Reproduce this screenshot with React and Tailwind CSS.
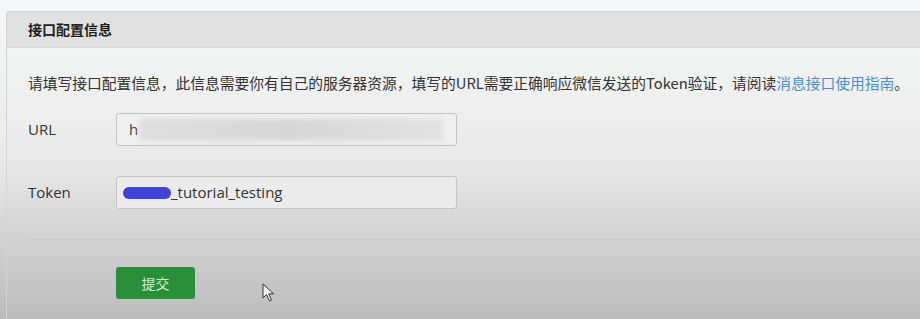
export default function App() {
  return (
    <div
      className="relative w-[920px] h-[319px] overflow-hidden bg-gradient-to-b from-[#f7f8f9] via-[#e9e9e9] to-[#bcbcbc] pt-[11px] pl-[6px]"
      style={{ fontFamily: '"Noto Sans CJK SC", "Noto Sans", sans-serif' }}
    >
      <div className="h-full border-l border-t border-[#d4d4d4] rounded-tl-[3px]">
        {/* header */}
        <div className="h-[36px] flex items-center px-[21px] bg-[#e1e1e1] border-b border-[#d9d9d9]">
          <span className="text-[14px] font-bold text-[#222]">接口配置信息</span>
        </div>

        <div className="pl-[21px]">
          <p className="mt-[25px] leading-[20px] text-[14.75px] text-[#333] whitespace-nowrap">
            请填写接口配置信息，此信息需要你有自己的服务器资源，填写的URL需要正确响应微信发送的Token验证，请阅读
            <span className="text-[#4a8fd8]">消息接口使用指南</span>。
          </p>

          {/* URL */}
          <div className="mt-[20px] flex items-center">
            <label className="w-[88px] text-[15px] text-[#333]" style={{ fontFamily: '"Open Sans", sans-serif' }}>URL</label>
            <div className="w-[341px] h-[33px] flex items-center px-[12px] border border-[#c4c4c4] rounded-[3px] bg-[#efefef] overflow-hidden">
              <span className="text-[15px] text-[#444]" style={{ fontFamily: '"Open Sans", sans-serif' }}>h</span>
              <div className="flex-1 h-[22px] ml-[2px] rounded-[2px] bg-gradient-to-r from-[#dedede] via-[#d7d7d7] to-[#e2e2e2] blur-[2px]"></div>
            </div>
          </div>

          {/* Token */}
          <div className="mt-[30px] flex items-center">
            <label className="w-[88px] text-[15px] text-[#333]" style={{ fontFamily: '"Open Sans", sans-serif' }}>Token</label>
            <div className="w-[341px] h-[33px] flex items-center px-[6px] border border-[#c4c4c4] rounded-[3px] bg-[#ebebeb]">
              <span className="inline-block w-[48px] h-[12px] mt-[1px] rounded-full bg-[#3f43d9]"></span>
              <span className="text-[15px] text-[#333]" style={{ fontFamily: '"Open Sans", sans-serif' }}>_tutorial_testing</span>
            </div>
          </div>

          <div className="mt-[30px] h-px bg-[#cacaca]"></div>

          <div className="mt-[27px] pl-[88px]">
            <button className="w-[79px] h-[32px] rounded-[3px] bg-[#2a8f3a] text-[14px] text-[#d4ecd8]">提交</button>
          </div>
        </div>
      </div>

      {/* mouse cursor */}
      <svg className="absolute left-[262px] top-[283px]" width="16" height="20" viewBox="0 0 16 20">
        <path d="M1 1 L1 15 L4.5 11.5 L7.5 18 L9.5 17 L6.8 10.8 L11.5 10.8 Z" fill="#f2f2f2" stroke="#333" strokeWidth="1" strokeLinejoin="round" />
      </svg>
    </div>
  )
}
